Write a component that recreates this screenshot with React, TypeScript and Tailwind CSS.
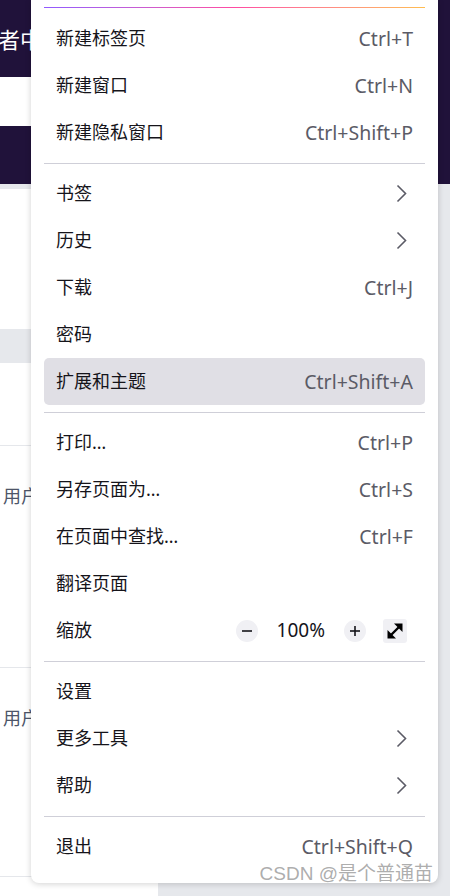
import React from 'react';

type Row =
  | { kind: 'item'; label: string; shortcut?: string; arrow?: boolean; active?: boolean }
  | { kind: 'zoom'; label: string }
  | { kind: 'sep' };

const rows: Row[] = [
  { kind: 'item', label: '新建标签页', shortcut: 'Ctrl+T' },
  { kind: 'item', label: '新建窗口', shortcut: 'Ctrl+N' },
  { kind: 'item', label: '新建隐私窗口', shortcut: 'Ctrl+Shift+P' },
  { kind: 'sep' },
  { kind: 'item', label: '书签', arrow: true },
  { kind: 'item', label: '历史', arrow: true },
  { kind: 'item', label: '下载', shortcut: 'Ctrl+J' },
  { kind: 'item', label: '密码' },
  { kind: 'item', label: '扩展和主题', shortcut: 'Ctrl+Shift+A', active: true },
  { kind: 'sep' },
  { kind: 'item', label: '打印…', shortcut: 'Ctrl+P' },
  { kind: 'item', label: '另存页面为…', shortcut: 'Ctrl+S' },
  { kind: 'item', label: '在页面中查找…', shortcut: 'Ctrl+F' },
  { kind: 'item', label: '翻译页面' },
  { kind: 'zoom', label: '缩放' },
  { kind: 'sep' },
  { kind: 'item', label: '设置' },
  { kind: 'item', label: '更多工具', arrow: true },
  { kind: 'item', label: '帮助', arrow: true },
  { kind: 'sep' },
  { kind: 'item', label: '退出', shortcut: 'Ctrl+Shift+Q' },
];

const Chevron = () => (
  <svg width="11" height="19" viewBox="0 0 11 19" className="mr-[6px]">
    <polyline points="1.5,1.5 9.5,9.5 1.5,17.5" fill="none" stroke="#5b5b66" strokeWidth="1.6" />
  </svg>
);

const RoundButton = ({ plus }: { plus?: boolean }) => (
  <div className="flex h-[22px] w-[22px] items-center justify-center rounded-full bg-[#f0f0f4]">
    <svg width="12" height="12" viewBox="0 0 12 12">
      <line x1="1" y1="6" x2="11" y2="6" stroke="#15141a" strokeWidth="1.6" />
      {plus && <line x1="6" y1="1" x2="6" y2="11" stroke="#15141a" strokeWidth="1.6" />}
    </svg>
  </div>
);

const MenuRow = ({ row }: { row: Row }) => {
  if (row.kind === 'sep') {
    return (
      <div className="flex h-[14px] items-center">
        <div className="h-px w-full bg-[#cfcfd8]" />
      </div>
    );
  }

  if (row.kind === 'zoom') {
    return (
      <div className="flex h-[47px] items-center px-[12px]">
        <span className="text-[18px] text-[#15141a]">{row.label}</span>
        <div className="ml-auto flex items-center">
          <RoundButton />
          <span className="mx-[19px] text-[19px] text-[#15141a]">100%</span>
          <RoundButton plus />
          <div className="ml-[17px] mr-[6px] flex h-[24px] w-[24px] items-center justify-center rounded-[3px] bg-[#f0f0f4]">
            <svg width="20" height="20" viewBox="0 0 20 20">
              <line x1="4.5" y1="15.5" x2="15.5" y2="4.5" stroke="#000" strokeWidth="2.4" />
              <polygon points="9,2.5 17.5,2.5 17.5,11" fill="#000" />
              <polygon points="2.5,9 2.5,17.5 11,17.5" fill="#000" />
            </svg>
          </div>
        </div>
      </div>
    );
  }

  return (
    <div
      className={
        'flex h-[47px] items-center rounded-[5px] px-[12px] ' + (row.active ? 'bg-[#e0dfe5]' : '')
      }
    >
      <span className="text-[18px] text-[#15141a]">{row.label}</span>
      <div className="ml-auto flex items-center">
        {row.shortcut && <span className="text-[19.5px] text-[#5b5b66]">{row.shortcut}</span>}
        {row.arrow && <Chevron />}
      </div>
    </div>
  );
};

export default function App() {
  return (
    <div className="relative h-[896px] w-[450px] overflow-hidden bg-white font-['Noto_Sans','Noto_Sans_CJK_SC',sans-serif]">
      {/* page behind the menu */}
      <div className="flex h-[184px] flex-col bg-[#20123a]">
        <div className="flex h-[77px] items-center">
          <span className="-ml-[2px] text-[22px] leading-none text-white">者中心</span>
        </div>
        <div className="h-[49px] w-[120px] bg-white" />
      </div>
      <div className="flex h-[712px]">
        <aside className="flex w-[158px] flex-col bg-[#e6e8ec]">
          <div className="mt-[5px] h-[140px] bg-white" />
          <div className="mt-[34px] flex flex-1 flex-col bg-white text-[18px] text-[#4d5568]">
            <div className="h-[83px] border-b border-[#e5e7eb]" />
            <div className="h-[222px] border-b border-[#e5e7eb] pl-[3px] pt-[37px]">
              <span>用户</span>
            </div>
            <div className="h-[209px] border-b border-[#e5e7eb] pl-[3px] pt-[37px]">
              <span>用户</span>
            </div>
          </div>
        </aside>
        <main className="flex-1 bg-[#e6e8ec]" />
      </div>

      {/* app menu popup */}
      <div className="absolute left-[31px] top-0 h-[883px] w-[407px] rounded-b-[8px] bg-white px-[13px] shadow-[0_1px_6px_rgba(0,0,0,0.18)]">
        <div className="mt-[7px] h-px bg-linear-to-r from-[#9059ff] via-[#ff4aa2] to-[#ffbd4f]" />
        <div className="mt-[7px] flex flex-col">
          {rows.map((row, i) => (
            <MenuRow key={i} row={row} />
          ))}
        </div>
      </div>

      <div className="absolute right-[17px] top-[864px] font-['Liberation_Sans','Noto_Sans_CJK_SC',sans-serif] text-[19px] leading-none text-[#a3a3a3]/90">
        CSDN @是个普通苗
      </div>
    </div>
  );
}
